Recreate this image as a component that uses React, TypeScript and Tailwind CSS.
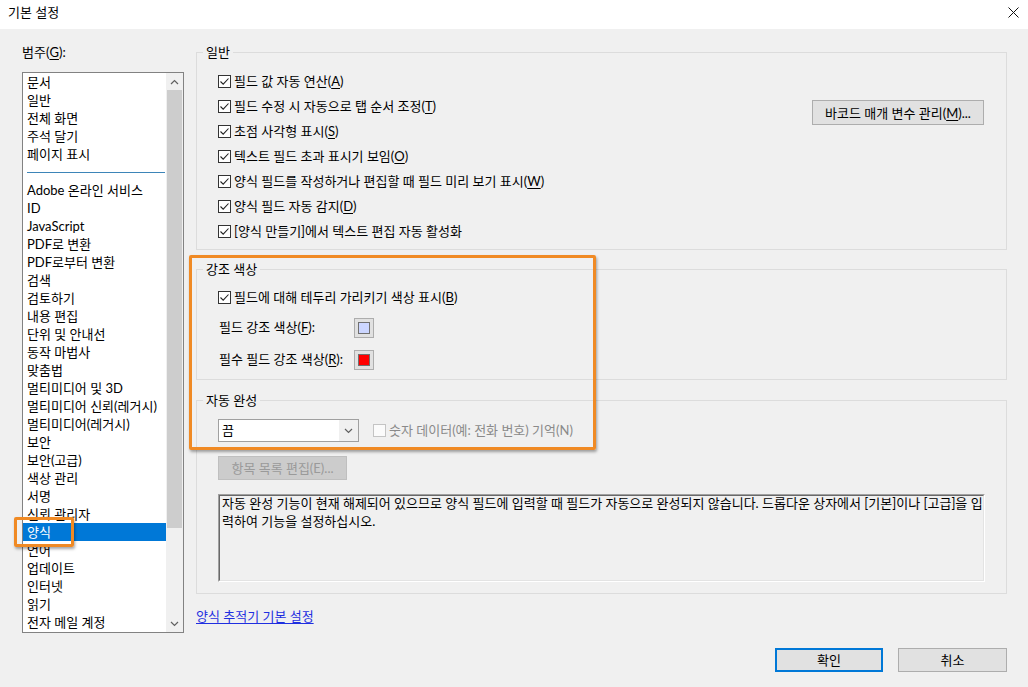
import React from "react";

const categories: Array<string | null> = [
  "문서",
  "일반",
  "전체 화면",
  "주석 달기",
  "페이지 표시",
  null,
  "Adobe 온라인 서비스",
  "ID",
  "JavaScript",
  "PDF로 변환",
  "PDF로부터 변환",
  "검색",
  "검토하기",
  "내용 편집",
  "단위 및 안내선",
  "동작 마법사",
  "맞춤법",
  "멀티미디어 및 3D",
  "멀티미디어 신뢰(레거시)",
  "멀티미디어(레거시)",
  "보안",
  "보안(고급)",
  "색상 관리",
  "서명",
  "신뢰 관리자",
  "양식",
  "언어",
  "업데이트",
  "인터넷",
  "읽기",
  "전자 메일 계정",
];

const generalOptions: Array<{ text: string; key?: string }> = [
  { text: "필드 값 자동 연산", key: "A" },
  { text: "필드 수정 시 자동으로 탭 순서 조정", key: "T" },
  { text: "초점 사각형 표시", key: "S" },
  { text: "텍스트 필드 초과 표시기 보임", key: "O" },
  { text: "양식 필드를 작성하거나 편집할 때 필드 미리 보기 표시", key: "W" },
  { text: "양식 필드 자동 감지", key: "D" },
  { text: "[양식 만들기]에서 텍스트 편집 자동 활성화" },
];

function Mnemonic({ text, mkey, tail = "" }: { text: string; mkey?: string; tail?: string }) {
  if (!mkey) return <span>{text}{tail}</span>;
  return (
    <span>
      {text}(<u className="underline-offset-[2px]">{mkey}</u>){tail}
    </span>
  );
}

function CheckBox({ checked = true, disabled = false }: { checked?: boolean; disabled?: boolean }) {
  return (
    <span
      className={`flex h-[13px] w-[13px] shrink-0 items-center justify-center border ${
        disabled ? "border-[#c4c4c4] bg-[#fbfbfb]" : "border-[#333333] bg-white"
      }`}
    >
      {checked && (
        <svg width="11" height="11" viewBox="0 0 11 11">
          <path d="M1.5 5.5 L4.2 8.2 L9.5 2.5" fill="none" stroke="#222" strokeWidth="1.1" />
        </svg>
      )}
    </span>
  );
}

function CheckRow({ text, mkey }: { text: string; mkey?: string }) {
  return (
    <div className="flex h-[25px] items-center gap-[3px]">
      <CheckBox />
      <Mnemonic text={text} mkey={mkey} />
    </div>
  );
}

function Swatch({ color }: { color: string }) {
  return (
    <div className="flex h-[20px] w-[20px] border border-[#adadad] bg-[#e1e1e1] p-[3px]">
      <div className={`flex-1 border border-[#707070] ${color}`} />
    </div>
  );
}

function GroupBox({
  title,
  className = "",
  children,
}: {
  title: string;
  className?: string;
  children: React.ReactNode;
}) {
  return (
    <fieldset className={`m-0 min-w-0 border border-[#dcdcdc] p-0 ${className}`}>
      <legend className="ml-[6px] px-[3px] leading-[18px]">{title}</legend>
      {children}
    </fieldset>
  );
}

function Chevron({ up = false }: { up?: boolean }) {
  return (
    <svg width="9" height="6" viewBox="0 0 9 6">
      <path
        d={up ? "M1 5 L4.5 1.5 L8 5" : "M1 1 L4.5 4.5 L8 1"}
        fill="none"
        stroke="#606060"
        strokeWidth="1.2"
      />
    </svg>
  );
}

function CategoryList() {
  return (
    <div className="flex h-[561px] w-[162px] border border-[#828282] bg-white">
      <div className="flex w-[143px] flex-col">
        {categories.map((item, index) =>
          item === null ? (
            <div key={`sep-${index}`} className="flex h-[18px] items-center pl-[4px] pr-[1px]">
              <div className="h-px w-full bg-[#3d85b8]" />
            </div>
          ) : (
            <div
              key={item}
              className={`h-[18px] whitespace-nowrap pl-[4px] leading-[18px] ${
                item === "양식" ? "bg-[#0078d7] text-white" : ""
              }`}
            >
              {item}
            </div>
          ),
        )}
      </div>
      <div className="flex w-[17px] flex-col bg-[#f0f0f0]">
        <div className="flex h-[17px] items-center justify-center">
          <Chevron up />
        </div>
        <div className="mx-px h-[438px] bg-[#cdcdcd]" />
        <div className="flex-1" />
        <div className="flex h-[17px] items-center justify-center">
          <Chevron />
        </div>
      </div>
    </div>
  );
}

export default function App() {
  return (
    <div className="relative h-[687px] w-[1028px] overflow-hidden bg-[#f0f0f0] font-['Lato','Noto_Sans_CJK_KR',sans-serif] text-[13px] text-black">
      {/* title bar */}
      <div className="flex h-[29px] items-start justify-between bg-white pl-[8px] pr-[9px] pt-[3px]">
        <span className="leading-[18px]">기본 설정</span>
        <svg className="mt-[4px]" width="11" height="11" viewBox="0 0 11 11">
          <path d="M0.5 0.5 L10.5 10.5 M10.5 0.5 L0.5 10.5" stroke="#111" strokeWidth="1" />
        </svg>
      </div>

      <div className="flex">
        {/* left: categories */}
        <div className="ml-[22px] mt-[14px] flex w-[162px] flex-col">
          <div className="h-[18px] leading-[18px]">
            <Mnemonic text="범주" mkey="G" tail=":" />
          </div>
          <div className="mt-[11px]">
            <CategoryList />
          </div>
        </div>

        {/* right: panels */}
        <div className="ml-[12px] mt-[14px] flex w-[811px] flex-col">
          <GroupBox title="일반">
            <div className="flex justify-between pb-[5px] pl-[21px] pt-[8px]">
              <div className="flex flex-col">
                {generalOptions.map((opt) => (
                  <CheckRow key={opt.text} text={opt.text} mkey={opt.key} />
                ))}
              </div>
              <button className="mr-[22px] mt-[31px] h-[25px] w-[172px] self-start border border-[#adadad] bg-[#e1e1e1] leading-[18px]">
                <Mnemonic text="바코드 매개 변수 관리" mkey="M" tail="..." />
              </button>
            </div>
          </GroupBox>

          <GroupBox title="강조 색상" className="mt-[10px]">
            <div className="flex flex-col pb-[9px] pl-[21px] pt-[7px]">
              <CheckRow text="필드에 대해 테두리 가리키기 색상 표시" mkey="B" />
              <div className="ml-px mt-[8px] flex h-[20px] items-center">
                <span className="w-[135px]">
                  <Mnemonic text="필드 강조 색상" mkey="F" tail=":" />
                </span>
                <Swatch color="bg-[#ccd6ff]" />
              </div>
              <div className="ml-px mt-[12px] flex h-[20px] items-center">
                <span className="w-[135px]">
                  <Mnemonic text="필수 필드 강조 색상" mkey="R" tail=":" />
                </span>
                <Swatch color="bg-[#ff0000]" />
              </div>
            </div>
          </GroupBox>

          <GroupBox title="자동 완성" className="mt-[11px]">
            <div className="flex flex-col pb-[11px] pl-[21px] pt-[10px]">
              <div className="flex items-center">
                <div className="flex h-[23px] w-[141px] border border-[#a0a0a0] bg-white">
                  <span className="flex-1 pl-[3px] leading-[21px]">끔</span>
                  <span className="flex w-[19px] items-center justify-center bg-[#f0f0f0]">
                    <Chevron />
                  </span>
                </div>
                <div className="ml-[14px] flex items-center gap-[3px] text-[#8a8a8a]">
                  <CheckBox checked={false} disabled />
                  <span>숫자 데이터(예: 전화 번호) 기억(N)</span>
                </div>
              </div>
              <button
                disabled
                className="mt-[14px] h-[24px] w-[129px] border border-[#bfbfbf] bg-[#cccccc] leading-[18px] text-[#9a9a9a]"
              >
                항목 목록 편집(E)...
              </button>
              <div className="mt-[14px] h-[88px] w-[767px] border border-b-white border-l-[#a0a0a0] border-r-white border-t-[#a0a0a0]">
                <div className="h-full border border-b-[#e3e3e3] border-l-[#696969] border-r-[#e3e3e3] border-t-[#696969] pl-[2px] leading-[18px]">
                  <p className="-mt-[2px] whitespace-nowrap">
                    자동 완성 기능이 현재 해제되어 있으므로 양식 필드에 입력할 때 필드가 자동으로 완성되지 않습니다. 드롭다운 상자에서 [기본]이나 [고급]을 입
                  </p>
                  <p className="whitespace-nowrap">력하여 기능을 설정하십시오.</p>
                </div>
              </div>
            </div>
          </GroupBox>

          <a href="#" className="mt-[13px] self-start leading-[18px] text-[#1f2fe0] underline underline-offset-[2px]">
            양식 추적기 기본 설정
          </a>
        </div>
      </div>

      {/* footer buttons */}
      <div className="mt-[15px] flex justify-end gap-[15px] pr-[21px]">
        <button className="h-[24px] w-[108px] border-2 border-[#0078d7] bg-[#e1e1e1] leading-[18px]">확인</button>
        <button className="h-[24px] w-[109px] border border-[#adadad] bg-[#e1e1e1] leading-[18px]">취소</button>
      </div>

      {/* orange highlight annotations */}
      <div className="pointer-events-none absolute left-[14px] top-[517px] h-[30px] w-[60px] rounded-[2px] border-[3px] border-[#f08a24] shadow-[1px_2px_3px_rgba(0,0,0,0.35)]" />
      <div className="pointer-events-none absolute left-[189px] top-[255px] h-[195px] w-[407px] rounded-[2px] border-[3px] border-[#f08a24] shadow-[1px_2px_3px_rgba(0,0,0,0.35)]" />
    </div>
  );
}
